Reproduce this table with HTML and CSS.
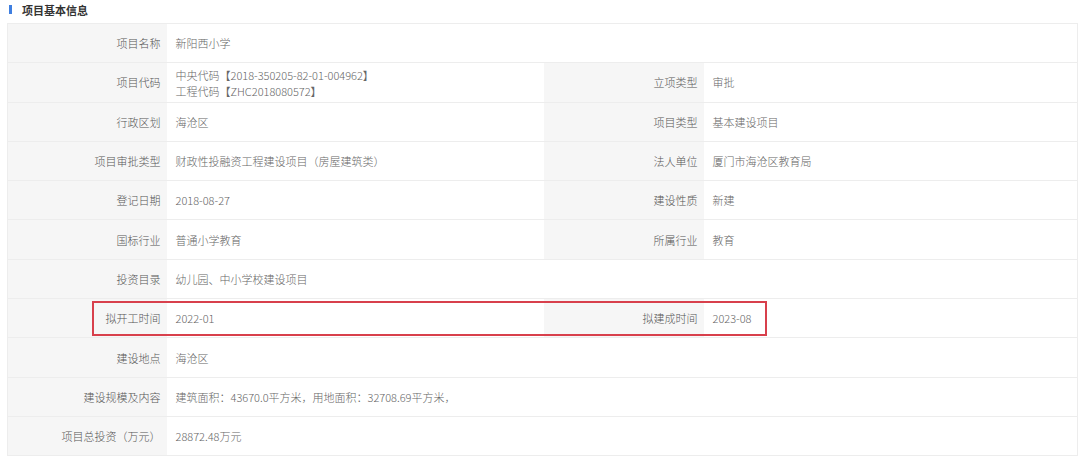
FILE: index.html
```html
<!DOCTYPE html>
<html lang="zh-CN">
<head>
    <meta charset="UTF-8">
    <title>项目基本信息</title>
    <link rel="stylesheet" href="styles.css">
</head>
<body>
    <div class="panel">
        <h2 class="title"><span class="bar"></span>项目基本信息</h2>
        <table class="info">
            <colgroup>
                <col class="c-label"><col class="c-value"><col class="c-label2"><col>
            </colgroup>
            <tr><th>项目名称</th><td colspan="3">新阳西小学</td></tr>
            <tr>
                <th>项目代码</th>
                <td class="two">
                    <div>中央代码【2018-350205-82-01-004962】</div>
                    <div>工程代码【ZHC2018080572】</div>
                </td>
                <th>立项类型</th><td>审批</td>
            </tr>
            <tr><th>行政区划</th><td>海沧区</td><th>项目类型</th><td>基本建设项目</td></tr>
            <tr><th>项目审批类型</th><td>财政性投融资工程建设项目（房屋建筑类）</td><th>法人单位</th><td>厦门市海沧区教育局</td></tr>
            <tr><th>登记日期</th><td>2018-08-27</td><th>建设性质</th><td>新建</td></tr>
            <tr><th>国标行业</th><td>普通小学教育</td><th>所属行业</th><td>教育</td></tr>
            <tr><th>投资目录</th><td colspan="3">幼儿园、中小学校建设项目</td></tr>
            <tr class="mark"><th>拟开工时间</th><td>2022-01</td><th>拟建成时间</th><td>2023-08</td></tr>
            <tr><th>建设地点</th><td colspan="3">海沧区</td></tr>
            <tr><th>建设规模及内容</th><td colspan="3">建筑面积：43670.0平方米，用地面积：32708.69平方米，</td></tr>
            <tr><th>项目总投资（万元）</th><td colspan="3">28872.48万元</td></tr>
        </table>
        <div class="highlight"></div>
    </div>
</body>
</html>
```

FILE: styles.css
```css
body { margin: 0; background: #fff; font-family: "Noto Sans CJK SC", "Noto Sans", sans-serif; font-size: 11px; font-weight: 300; color: #666; }
.panel { position: relative; padding: 2px 2px 0 7px; }
.title { margin: 0 0 6px 2px; height: 15px; font-size: 11px; font-weight: bold; color: #333; display: flex; align-items: center; gap: 10px; }
.bar { width: 3px; height: 9px; background: #3f7fe0; }
.info { border-collapse: collapse; width: 1071px; table-layout: fixed; border: 1px solid #ededed; }
.c-label { width: 159px; }
.c-value { width: 377px; }
.c-label2 { width: 160px; }
.info tr { height: 39.3px; }
.info th, .info td { border-top: 1px solid #ededed; padding: 0 9px; font-weight: 300; white-space: nowrap; }
.info th { background: #f6f6f6; color: #555; text-align: right; padding-right: 6px; }
.info td { background: #fff; text-align: left; color: #666; }
.info td.two { line-height: 16px; padding-top: 1px; }
.highlight { position: absolute; left: 92px; top: 301px; width: 671px; height: 31px; border: 2px solid #d8404c; }
```
